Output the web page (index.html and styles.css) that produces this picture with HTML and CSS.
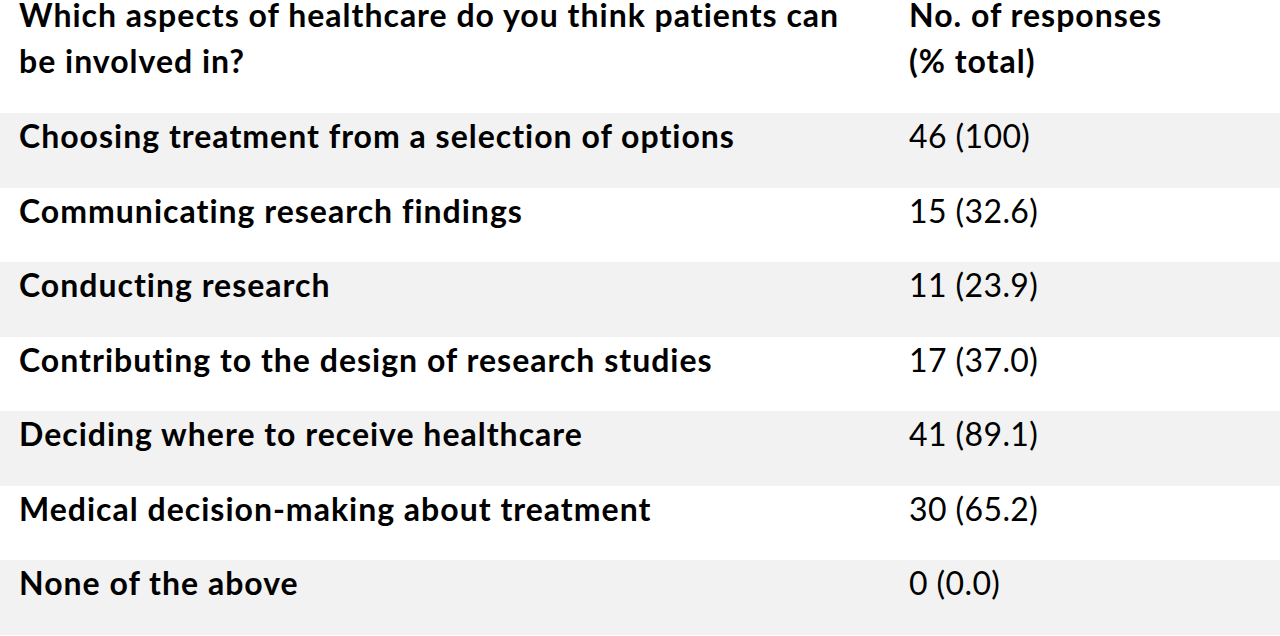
FILE: index.html
```html
<!DOCTYPE html>
<html>
<head>
<meta charset="utf-8">
<link rel="stylesheet" href="styles.css">
</head>
<body>
<div class="table">
  <div class="row head">
    <div class="cell label"><span class="line">Which aspects of healthcare do you think patients can</span><span class="line">be involved in?</span></div>
    <div class="cell value"><span class="line">No. of responses</span><span class="line">(% total)</span></div>
  </div>
  <div class="row shade">
    <div class="cell label">Choosing treatment from a selection of options</div>
    <div class="cell value">46 (100)</div>
  </div>
  <div class="row">
    <div class="cell label">Communicating research findings</div>
    <div class="cell value">15 (32.6)</div>
  </div>
  <div class="row shade">
    <div class="cell label">Conducting research</div>
    <div class="cell value">11 (23.9)</div>
  </div>
  <div class="row">
    <div class="cell label">Contributing to the design of research studies</div>
    <div class="cell value">17 (37.0)</div>
  </div>
  <div class="row shade">
    <div class="cell label">Deciding where to receive healthcare</div>
    <div class="cell value">41 (89.1)</div>
  </div>
  <div class="row">
    <div class="cell label">Medical decision-making about treatment</div>
    <div class="cell value">30 (65.2)</div>
  </div>
  <div class="row shade">
    <div class="cell label">None of the above</div>
    <div class="cell value">0 (0.0)</div>
  </div>
</div>
</body>
</html>
```

FILE: styles.css
```css
html, body {
  margin: 0;
  padding: 0;
  background: #ffffff;
}
body {
  font-family: Lato, "Liberation Sans", sans-serif;
  font-size: 32px;
  color: #000000;
}
.table {
  display: grid;
  grid-template-rows: 113px repeat(7, 74.57px);
  width: 1280px;
}
.row {
  display: grid;
  grid-template-columns: 890px 1fr;
}
.row.shade {
  background: #f2f2f2;
}
.cell {
  line-height: 46px;
  padding-left: 19px;
  white-space: nowrap;
}
.label {
  font-weight: 700;
  letter-spacing: 1px;
}
.value {
  font-weight: 400;
  letter-spacing: 0.4px;
}
.head .cell {
  font-weight: 700;
  letter-spacing: 1px;
}
.head .line {
  display: block;
  line-height: 30px;
}
.head .line + .line {
  margin-top: 16px;
}
```
